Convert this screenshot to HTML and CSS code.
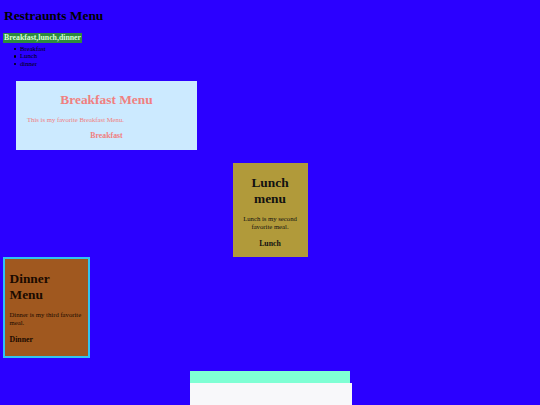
FILE: index.html
```html
<!DOCTYPE html>
<html>
<head>
<meta charset="utf-8">
<title>Restraunts Menu</title>
<link rel="stylesheet" href="styles.css">
</head>
<body>
<h1 class="title">Restraunts Menu</h1>
<h3 class="tag">Breakfast,lunch,dinner</h3>
<ul class="meals">
  <li>Breakfast</li>
  <li>Lunch</li>
  <li>dinner</li>
</ul>
<section class="card breakfast">
  <h1 class="card-title">Breakfast Menu</h1>
  <p class="card-text">This is my favorite Breakfast Menu.</p>
  <h3 class="card-label">Breakfast</h3>
</section>
<section class="card lunch">
  <h1 class="card-title">Lunch menu</h1>
  <p class="card-text">Lunch is my second favorite meal.</p>
  <h3 class="card-label">Lunch</h3>
</section>
<section class="card dinner">
  <h1 class="card-title">Dinner Menu</h1>
  <p class="card-text">Dinner is my third favorite meal.</p>
  <h3 class="card-label">Dinner</h3>
</section>
<div class="strip"></div>
<div class="panel"></div>
</body>
</html>
```
FILE: styles.css
```css
html, body {
  margin: 0;
  padding: 0;
}
body {
  background: #2b00ff;
  font-family: "Liberation Serif", "Times New Roman", serif;
  color: #000;
  padding: 0 4px;
  overflow: hidden;
  height: 405px;
}
.title {
  font-size: 13.4px;
  line-height: 16px;
  margin: 8px 0 0;
  font-weight: bold;
}
.tag {
  width: fit-content;
  margin: 9px 0 0 -1px;
  padding: 0 1px;
  height: 10px;
  line-height: 10px;
  font-size: 7.8px;
  font-weight: bold;
  background: #2e8b3e;
  color: #d8ffd8;
}
.meals {
  margin: 2px 0 0;
  padding-left: 16px;
  font-size: 6.7px;
  line-height: 7.4px;
  list-style: none;
}
.meals li::before {
  content: "";
  display: inline-block;
  width: 2.4px;
  height: 2.4px;
  border-radius: 50%;
  background: #000;
  margin: 0 3.6px 1px -6px;
  vertical-align: middle;
}
.card {
  box-sizing: border-box;
}
.card-title {
  font-size: 13.4px;
  line-height: 16px;
  font-weight: bold;
  margin: 0;
}
.card-text {
  font-size: 6.7px;
  line-height: 8px;
  margin: 8px 0 0;
}
.card-label {
  font-size: 7.8px;
  line-height: 10px;
  font-weight: bold;
  margin: 8px 0 0;
}
.breakfast {
  margin: 14px 0 0 12px;
  width: 181px;
  height: 69px;
  background: #cceaff;
  color: #f08080;
  padding: 11px 0 0;
}
.breakfast .card-title,
.breakfast .card-label {
  text-align: center;
}
.breakfast .card-text {
  padding-left: 11px;
}
.breakfast .card-label {
  line-height: 8px;
  margin-top: 8px;
}
.lunch {
  margin: 13px auto 0;
  width: 75px;
  height: 94px;
  background: #b19a3a;
  color: #111;
  padding: 12px 4px 0;
  text-align: center;
}
.dinner {
  margin: 0 0 0 -1px;
  width: 87px;
  height: 101px;
  background: #a0581f;
  border: 2px solid #30c4f0;
  color: #1a0a00;
  padding: 11.5px 6px 0 4.5px;
}
.strip {
  margin: 13px 0 0 186px;
  width: 160px;
  height: 12px;
  background: #7fffd4;
}
.panel {
  margin: 0 0 0 186px;
  width: 162px;
  height: 40px;
  background: #f8f8fa;
}
```
